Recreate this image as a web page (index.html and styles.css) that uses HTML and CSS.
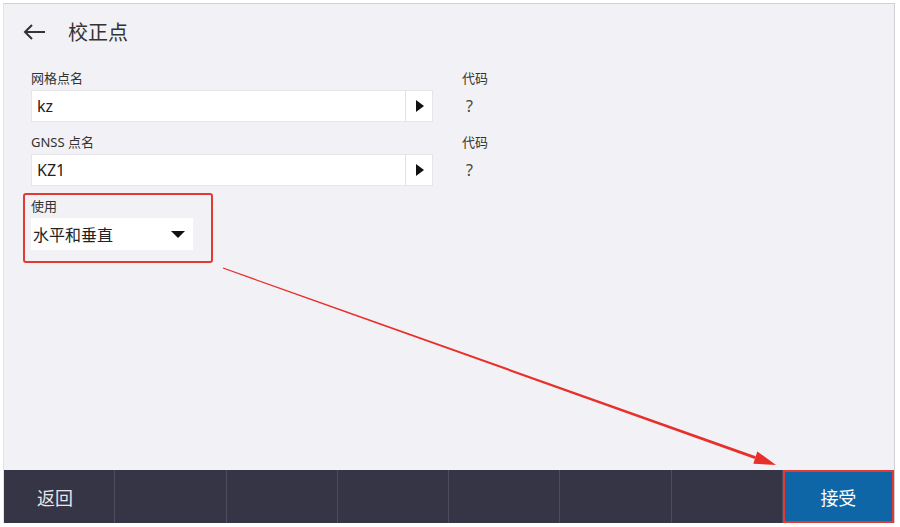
FILE: index.html
```html
<!DOCTYPE html>
<html>
  <head>
    <title>校正点</title>
    <link rel="stylesheet" href="styles.css">
  </head>
  <body>
    <div class="app">
      <div class="header">
        <svg class="back-icon" width="24" height="18" viewBox="0 0 24 18">
          <path d="M23 9H3M10 2L3 9l7 7" fill="none" stroke="#333" stroke-width="2"/>
        </svg>
        <span class="title">校正点</span>
      </div>

      <div class="form">
        <div class="field-row">
          <div class="field">
            <label>网格点名</label>
            <div class="input-box">
              <span class="input-text">kz</span>
              <span class="input-btn"><span class="tri-right"></span></span>
            </div>
          </div>
          <div class="code">
            <label>代码</label>
            <div class="code-value">?</div>
          </div>
        </div>

        <div class="field-row">
          <div class="field">
            <label>GNSS 点名</label>
            <div class="input-box">
              <span class="input-text">KZ1</span>
              <span class="input-btn"><span class="tri-right"></span></span>
            </div>
          </div>
          <div class="code">
            <label>代码</label>
            <div class="code-value">?</div>
          </div>
        </div>

        <div class="highlight">
          <label>使用</label>
          <div class="select-box">
            <span>水平和垂直</span>
            <span class="tri-down"></span>
          </div>
        </div>
      </div>

      <div class="footer">
        <div class="foot-cell">返回</div>
        <div class="foot-cell"></div>
        <div class="foot-cell"></div>
        <div class="foot-cell"></div>
        <div class="foot-cell"></div>
        <div class="foot-cell"></div>
        <div class="foot-cell"></div>
        <div class="foot-cell accept">接受</div>
      </div>
    </div>

    <!-- annotation arrow -->
    <svg class="annotation" width="900" height="527" viewBox="0 0 900 527">
      <polygon points="222.8,268.5 223.2,267.5 755.8,456.2 754.8,459" fill="#e8302a"/>
      <polygon points="776,465 757.3,451.4 753.3,463.8" fill="#e8302a"/>
    </svg>
  </body>
</html>
```

FILE: styles.css
```css
body {
  margin: 0;
  background: #ffffff;
  font-family: "Noto Sans", "Noto Sans CJK SC", sans-serif;
  color: #333;
}
.app {
  margin: 3px 5px 4px 3px;
  height: 519px;
  border-top: 1px solid #d0d0d4;
  border-left: 1px solid #e4e4e8;
  border-right: 1px solid #cfcfd4;
  background: #f2f1f6;
  display: flex;
  flex-direction: column;
}
.header {
  height: 55px;
  display: flex;
  align-items: center;
  padding-left: 18px;
}
.title {
  margin-left: 22px;
  font-size: 20px;
  color: #333;
}
.form {
  flex: 1;
  padding: 10px 0 0 27px;
}
.field-row {
  display: flex;
  gap: 29px;
  margin-bottom: 11px;
}
.field {
  width: 402px;
}
label {
  display: block;
  font-size: 13px;
  line-height: 18px;
  height: 18px;
  margin-bottom: 3px;
  color: #333;
}
.input-box {
  height: 32px;
  box-sizing: border-box;
  background: #fff;
  border: 1px solid #e6e6ea;
  display: flex;
  align-items: center;
}
.input-text {
  flex: 1;
  padding-left: 5px;
  font-size: 16px;
  color: #222;
}
.input-btn {
  width: 26px;
  height: 100%;
  border-left: 1px solid #e2e2e6;
  display: flex;
  align-items: center;
  justify-content: center;
}
.tri-right {
  width: 0;
  height: 0;
  border-top: 6px solid transparent;
  border-bottom: 6px solid transparent;
  border-left: 8px solid #111;
  margin-left: 2px;
}
.code-value {
  font-size: 16px;
  line-height: 32px;
  padding-left: 4px;
  color: #444;
}
.highlight {
  width: 180px;
  height: 64px;
  margin: -4px 0 0 -8px;
  border: 2px solid #e33a31;
  border-radius: 3px;
  padding: 2px 0 0 6px;
}
.select-box {
  width: 162px;
  height: 32px;
  box-sizing: border-box;
  background: #fff;
  display: flex;
  align-items: center;
  justify-content: space-between;
  padding: 0 8px 0 2px;
  font-size: 16px;
  color: #222;
}
.tri-down {
  width: 0;
  height: 0;
  border-left: 7px solid transparent;
  border-right: 7px solid transparent;
  border-top: 7px solid #111;
}
.footer {
  height: 53px;
  display: grid;
  grid-template-columns: repeat(8, 1fr);
  background: #363546;
}
.foot-cell {
  border-right: 1px solid #4d4c5e;
  display: flex;
  align-items: center;
  justify-content: center;
  color: #e6e6ea;
  font-size: 18px;
}
.foot-cell:first-child {
  justify-content: flex-start;
  padding-left: 33px;
}
.foot-cell.accept {
  background: #0f66a6;
  color: #fff;
  border: 2px solid #e03a35;
}
.annotation {
  position: absolute;
  left: 0;
  top: 0;
  pointer-events: none;
}
```
